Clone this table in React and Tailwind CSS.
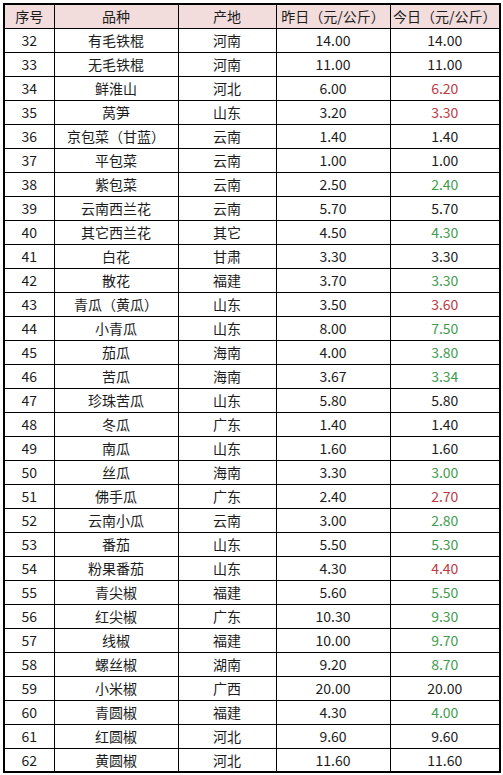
import React from 'react';

const rows = [
  [32, '有毛铁棍', '河南', '14.00', '14.00'],
  [33, '无毛铁棍', '河南', '11.00', '11.00'],
  [34, '鲜淮山', '河北', '6.00', '6.20'],
  [35, '莴笋', '山东', '3.20', '3.30'],
  [36, '京包菜（甘蓝）', '云南', '1.40', '1.40'],
  [37, '平包菜', '云南', '1.00', '1.00'],
  [38, '紫包菜', '云南', '2.50', '2.40'],
  [39, '云南西兰花', '云南', '5.70', '5.70'],
  [40, '其它西兰花', '其它', '4.50', '4.30'],
  [41, '白花', '甘肃', '3.30', '3.30'],
  [42, '散花', '福建', '3.70', '3.30'],
  [43, '青瓜（黄瓜）', '山东', '3.50', '3.60'],
  [44, '小青瓜', '山东', '8.00', '7.50'],
  [45, '茄瓜', '海南', '4.00', '3.80'],
  [46, '苦瓜', '海南', '3.67', '3.34'],
  [47, '珍珠苦瓜', '山东', '5.80', '5.80'],
  [48, '冬瓜', '广东', '1.40', '1.40'],
  [49, '南瓜', '山东', '1.60', '1.60'],
  [50, '丝瓜', '海南', '3.30', '3.00'],
  [51, '佛手瓜', '广东', '2.40', '2.70'],
  [52, '云南小瓜', '云南', '3.00', '2.80'],
  [53, '番茄', '山东', '5.50', '5.30'],
  [54, '粉果番茄', '山东', '4.30', '4.40'],
  [55, '青尖椒', '福建', '5.60', '5.50'],
  [56, '红尖椒', '广东', '10.30', '9.30'],
  [57, '线椒', '福建', '10.00', '9.70'],
  [58, '螺丝椒', '湖南', '9.20', '8.70'],
  [59, '小米椒', '广西', '20.00', '20.00'],
  [60, '青圆椒', '福建', '4.30', '4.00'],
  [61, '红圆椒', '河北', '9.60', '9.60'],
  [62, '黄圆椒', '河北', '11.60', '11.60'],
];

// today's price colour: red when up, green when down
function todayColor(yesterday, today) {
  const a = parseFloat(yesterday);
  const b = parseFloat(today);
  if (b > a) return 'text-[#c0393f]';
  if (b < a) return 'text-[#3f9c4f]';
  return 'text-[#1c1c1c]';
}

const cell = 'border border-black text-center p-0 leading-none';

export default function App() {
  return (
    <div className="w-[503px] h-[775px] bg-white pl-[3px] pt-[3px] font-['Noto_Sans_CJK_SC',sans-serif] text-[14px] text-[#1c1c1c]">
      <table className="w-[496px] table-fixed border-collapse border-2 border-black">
        <colgroup>
          <col className="w-[50px]" />
          <col className="w-[124px]" />
          <col className="w-[98px]" />
          <col className="w-[114px]" />
          <col className="w-[110px]" />
        </colgroup>
        <thead>
          <tr className="h-[24px] bg-[#f2dcdc]">
            <th className={`${cell} font-normal`}>序号</th>
            <th className={`${cell} font-normal`}>品种</th>
            <th className={`${cell} font-normal`}>产地</th>
            <th className={`${cell} font-normal whitespace-nowrap`}>昨日（元/公斤）</th>
            <th className={`${cell} font-normal whitespace-nowrap`}>今日（元/公斤）</th>
          </tr>
        </thead>
        <tbody>
          {rows.map(([no, name, origin, yday, today]) => (
            <tr key={no} className="h-[24px]">
              <td className={cell}>{no}</td>
              <td className={cell}>{name}</td>
              <td className={cell}>{origin}</td>
              <td className={cell}>{yday}</td>
              <td className={`${cell} ${todayColor(yday, today)}`}>{today}</td>
            </tr>
          ))}
        </tbody>
      </table>
    </div>
  );
}
